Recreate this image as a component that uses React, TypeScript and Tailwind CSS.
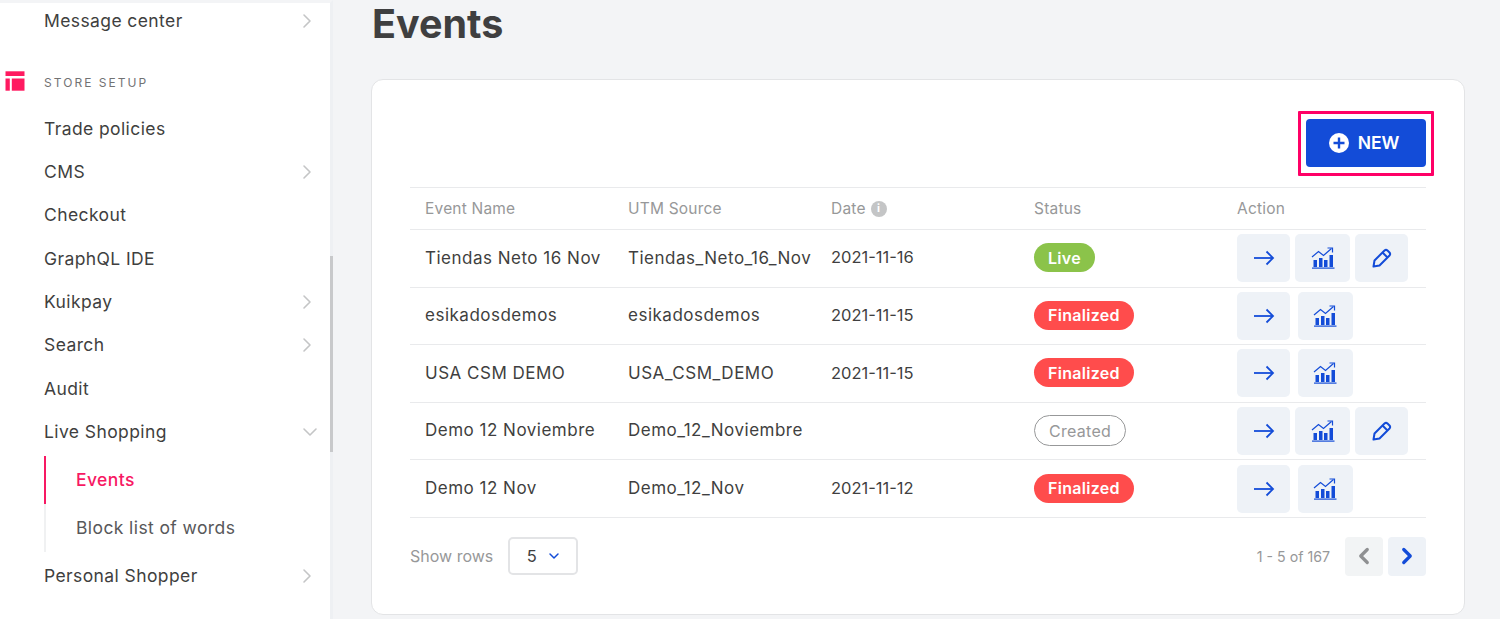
import React from "react";
import { ChevronRight, ChevronDown, ChevronLeft } from "lucide-react";

const rows = [
  { name: "Tiendas Neto 16 Nov", utm: "Tiendas_Neto_16_Nov", date: "2021-11-16", status: "Live", edit: true },
  { name: "esikadosdemos", utm: "esikadosdemos", date: "2021-11-15", status: "Finalized", edit: false },
  { name: "USA CSM DEMO", utm: "USA_CSM_DEMO", date: "2021-11-15", status: "Finalized", edit: false },
  { name: "Demo 12 Noviembre", utm: "Demo_12_Noviembre", date: "", status: "Created", edit: true },
  { name: "Demo 12 Nov", utm: "Demo_12_Nov", date: "2021-11-12", status: "Finalized", edit: false },
];

function MenuItem({ label, arrow }: { label: string; arrow?: boolean }) {
  return (
    <div className="flex h-[43.3px] items-center justify-between pl-11 pr-[11px] text-[#3f3f40]">
      <span>{label}</span>
      {arrow && <ChevronRight size={24} strokeWidth={1.6} className="text-[#c4c5c6]" />}
    </div>
  );
}

function ArrowIcon() {
  return (
    <svg width="22" height="16" viewBox="0 0 22 16" fill="none" stroke="#134cd8" strokeWidth="1.8">
      <path d="M1 8 H20" />
      <path d="M13.5 1.5 L20 8 L13.5 14.5" />
    </svg>
  );
}

function ChartIcon() {
  return (
    <svg width="24" height="22" viewBox="0 0 24 22" fill="none" className="text-[#134cd8]">
      <path d="M1 10 L7.5 4.5 L12.5 8.5 L20.5 1.5" stroke="currentColor" strokeWidth="1.2" />
      <path d="M16.5 1 H21.5 V5.5" stroke="currentColor" strokeWidth="1.2" />
      <rect x="2.5" y="13" width="3.5" height="7" fill="currentColor" />
      <rect x="8" y="11" width="3.5" height="9" fill="currentColor" />
      <rect x="13" y="13" width="3.5" height="7" fill="currentColor" />
      <rect x="18.5" y="8" width="3.5" height="12" fill="currentColor" />
      <rect x="1" y="20.5" width="22.5" height="1.2" fill="currentColor" />
    </svg>
  );
}

function PencilIcon() {
  return (
    <svg width="20" height="20" viewBox="0 0 20 20" fill="none" stroke="#134cd8" strokeWidth="2" strokeLinejoin="round">
      <path d="M1.5 18.5 L2.5 12.5 L12.5 2.5 Q14 1.2 15.5 2.5 L17.5 4.5 Q18.8 6 17.5 7.5 L7.5 17.5 Z" />
      <path d="M10.5 4.5 L15.5 9.5" />
    </svg>
  );
}

function StatusBadge({ status }: { status: string }) {
  if (status === "Live") {
    return <span className="inline-flex h-[29px] items-center rounded-full bg-[#8bc34a] px-[14px] text-[16px] font-semibold tracking-[0.3px] text-white">Live</span>;
  }
  if (status === "Finalized") {
    return <span className="inline-flex h-[29px] items-center rounded-full bg-[#ff4c4c] px-[14px] text-[16px] font-semibold tracking-[0.3px] text-white">Finalized</span>;
  }
  return <span className="inline-flex h-[31px] items-center rounded-full border border-[#979899] bg-white px-[14px] text-[16px] tracking-[0.3px] text-[#979899]">Created</span>;
}

function ActionButton({ children, wide }: { children: React.ReactNode; wide?: boolean }) {
  return (
    <button className={`flex h-12 items-center justify-center rounded-[5px] bg-[#eef2f7] ${wide ? "w-[55px]" : "w-[53px]"}`}>
      {children}
    </button>
  );
}

export default function App() {
  return (
    <div className="flex h-[619px] overflow-hidden bg-[#f3f4f6] font-['Inter',sans-serif] text-[#3f3f40]">
      {/* Sidebar */}
      <aside className="relative h-full w-[333px] shrink-0 border-r-[3px] border-t-[3px] border-r-[#eef0f3] border-t-[#f3f4f6] bg-white text-[17.5px] tracking-[0.4px]">
        <div className="-mt-[4px]">
          <MenuItem label="Message center" arrow />
          <div className="mb-[11px] mt-[28px] flex h-[26px] items-center pl-[5px]">
            <svg width="20" height="20" viewBox="0 0 20 20" className="-mt-[4px] mr-[19px] fill-[#ff1a60]">
              <rect x="0.5" y="0.3" width="19" height="4.7" />
              <rect x="0.5" y="7.5" width="4.3" height="12.2" />
              <rect x="6.8" y="7.5" width="12.7" height="12.2" />
            </svg>
            <span className="text-[12px] uppercase tracking-[0.17em] text-[#727273]">Store setup</span>
          </div>
          <MenuItem label="Trade policies" />
          <MenuItem label="CMS" arrow />
          <MenuItem label="Checkout" />
          <MenuItem label="GraphQL IDE" />
          <MenuItem label="Kuikpay" arrow />
          <MenuItem label="Search" arrow />
          <MenuItem label="Audit" />
          <div className="flex h-[43.3px] items-center justify-between pl-11 pr-[8px]">
            <span>Live Shopping</span>
            <ChevronDown size={24} strokeWidth={1.6} className="text-[#c4c5c6]" />
          </div>
          <div className="ml-11 mt-[2px] border-l-[2px] border-[#f0f1f2]">
            <div className="-ml-[2px] flex h-12 items-center border-l-[2px] border-[#f71963] pl-[30px] font-medium text-[#f71963]">Events</div>
            <div className="-ml-[2px] flex h-12 items-center pl-[32px] text-[#58585a]">Block list of words</div>
          </div>
          <div className="mt-[3px]">
            <MenuItem label="Personal Shopper" arrow />
          </div>
        </div>
        <div className="absolute -right-[3px] top-[253px] h-[196px] w-[3px] bg-[#c8c9cb]" />
      </aside>

      {/* Main */}
      <main className="flex-1 pl-[38px] pr-[35px]">
        <h1 className="flex h-[50px] items-center pl-px text-[39.5px] font-bold text-[#3f3f40]">Events</h1>
        <section className="mt-[29px] h-[536px] rounded-xl border border-[#e3e4e6] bg-white px-[38px] pt-[39px]">
          <div className="flex justify-end">
            <div className="relative">
              <button className="flex h-12 w-[120px] items-center justify-center gap-[9px] rounded-[4px] bg-[#134cd8] pr-[4px] text-[17.5px] font-semibold text-white">
                <svg width="20" height="20" viewBox="0 0 20 20">
                  <circle cx="10" cy="10" r="10" fill="white" />
                  <path d="M10 4.5 V15.5 M4.5 10 H15.5" stroke="#134cd8" strokeWidth="2.4" />
                </svg>
                NEW
              </button>
              <span className="absolute -bottom-[9px] -left-[8px] -right-[8px] -top-[8px] rounded-[1px] border-[3px] border-[#ff0066]" />
            </div>
          </div>

          <table className="mt-5 w-[1016px] table-fixed border-collapse text-[17px] tracking-[0.5px]">
            <thead>
              <tr className="h-[42px] border-y border-y-[#e9eaec] text-left text-[15.5px] tracking-[0.2px] text-[#979899]">
                <th className="w-[203px] pl-[15px] font-normal">Event Name</th>
                <th className="w-[203px] pl-[15px] font-normal">UTM Source</th>
                <th className="w-[203px] pl-[15px] font-normal">
                  <span className="inline-flex items-center gap-[5px]">
                    Date
                    <span className="flex h-4 w-4 items-center justify-center rounded-full bg-[#c4c5c6] text-[11px] font-bold text-white">i</span>
                  </span>
                </th>
                <th className="w-[203px] pl-[15px] font-normal">Status</th>
                <th className="w-[204px] pl-[15px] font-normal">Action</th>
              </tr>
            </thead>
            <tbody>
              {rows.map((row) => (
                <tr key={row.name} className="h-[57.6px] border-b border-b-[#e9eaec]">
                  <td className="whitespace-nowrap pl-[15px]">{row.name}</td>
                  <td className="whitespace-nowrap pl-[15px]">{row.utm}</td>
                  <td className="whitespace-nowrap pb-[1px] pl-[15px] text-[16.5px] tracking-normal">{row.date}</td>
                  <td className="pb-[1px] pl-[15px]">
                    <StatusBadge status={row.status} />
                  </td>
                  <td className="pl-[15px]">
                    <div className={`flex ${row.edit ? "gap-[5px]" : "gap-[7.5px]"}`}>
                      <ActionButton>
                        <ArrowIcon />
                      </ActionButton>
                      <ActionButton wide>
                        <ChartIcon />
                      </ActionButton>
                      {row.edit && (
                        <ActionButton>
                          <PencilIcon />
                        </ActionButton>
                      )}
                    </div>
                  </td>
                </tr>
              ))}
            </tbody>
          </table>

          <div className="mt-[19px] flex items-center justify-between">
            <div className="flex items-center gap-[15px] text-[16px] text-[#979899]">
              <span>Show rows</span>
              <div className="flex h-[38px] w-[70px] items-center justify-center gap-[9px] rounded-[5px] border-2 border-[#e3e4e6] pl-[2px] text-[16.5px] text-[#3f3f40]">
                5
                <ChevronDown size={16} strokeWidth={2.2} className="text-[#134cd8]" />
              </div>
            </div>
            <div className="flex items-center">
              <span className="mr-[15px] text-[14.2px] text-[#979899]">1 - 5 of 167</span>
              <button className="mr-[5px] flex h-[39px] w-[38px] items-center justify-center rounded-[4px] bg-[#f2f4f5]">
                <ChevronLeft size={26} strokeWidth={3} className="text-[#8f9092]" />
              </button>
              <button className="flex h-[39px] w-[38px] items-center justify-center rounded-[4px] bg-[#eef2f7]">
                <ChevronRight size={26} strokeWidth={3} className="text-[#134cd8]" />
              </button>
            </div>
          </div>
        </section>
      </main>
    </div>
  );
}
